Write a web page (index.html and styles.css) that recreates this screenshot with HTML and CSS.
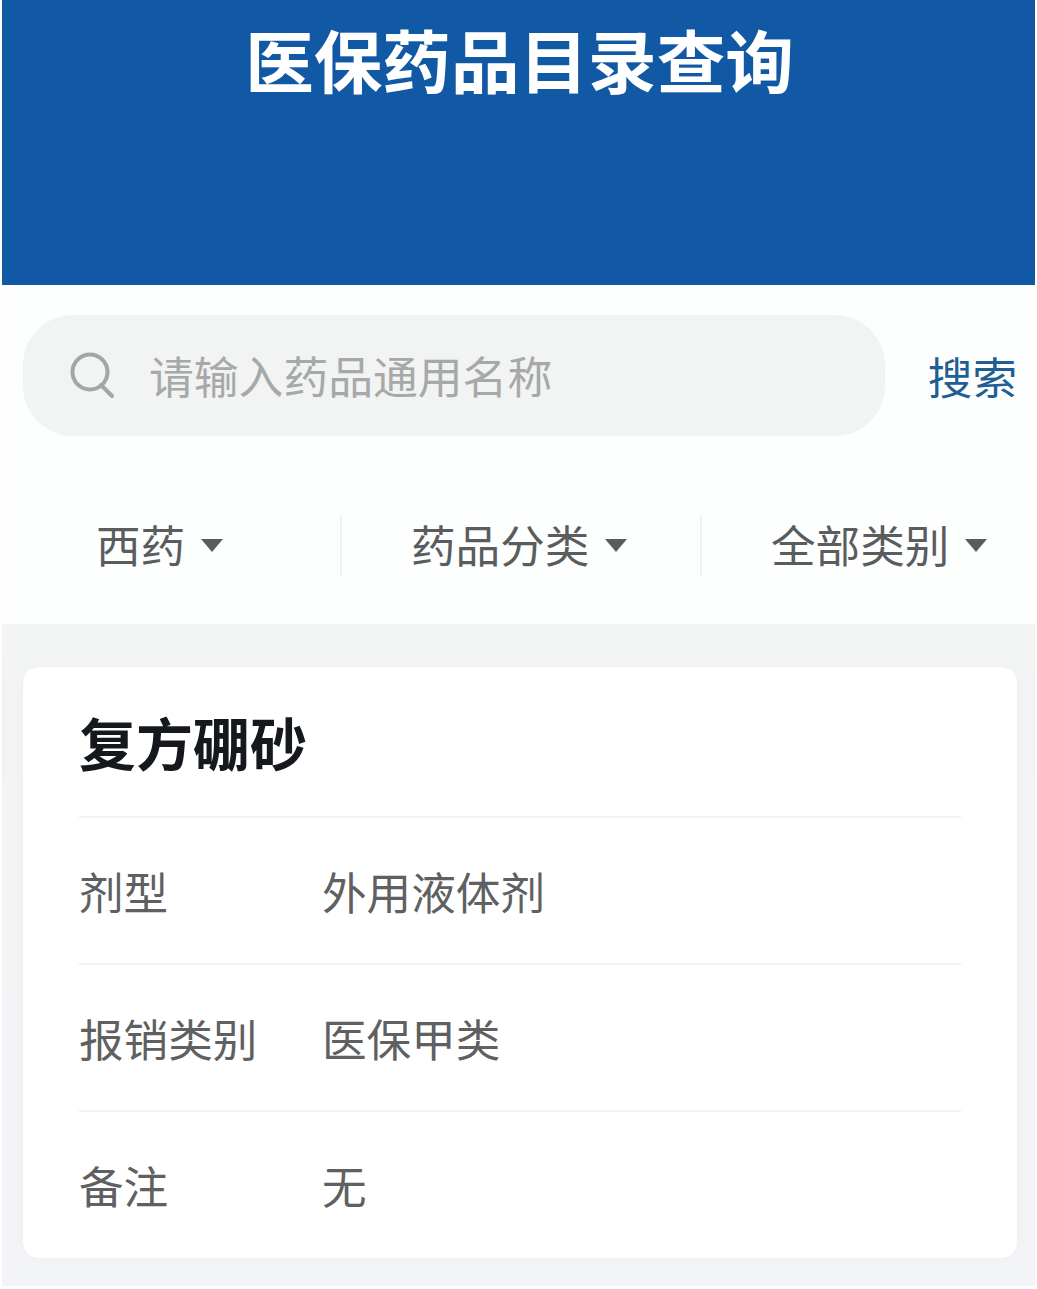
FILE: index.html
```html
<!DOCTYPE html>
<html lang="zh-CN">
<head>
<meta charset="utf-8">
<title>医保药品目录查询</title>
<link rel="stylesheet" href="styles.css">
</head>
<body>
<div class="page">
  <header class="hero"><h1>医保药品目录查询</h1></header>
  <section class="search">
    <div class="search-box">
      <svg class="search-icon" viewBox="0 0 44 46" aria-hidden="true"><circle cx="20" cy="20" r="17.5"/><path d="M31 33l11 11"/></svg>
      <span class="placeholder">请输入药品通用名称</span>
    </div>
    <span class="search-btn">搜索</span>
  </section>
  <nav class="tabs">
    <div class="tab tab-a"><span class="tab-text">西药</span><i class="caret"></i></div>
    <div class="tab tab-b"><span class="tab-text">药品分类</span><i class="caret"></i></div>
    <div class="tab tab-c"><span class="tab-text">全部类别</span><i class="caret"></i></div>
  </nav>
  <main class="list">
    <article class="card">
      <h2>复方硼砂</h2>
      <div class="row"><span class="label">剂型</span><span>外用液体剂</span></div>
      <div class="row"><span class="label">报销类别</span><span>医保甲类</span></div>
      <div class="row"><span class="label">备注</span><span>无</span></div>
    </article>
  </main>
</div>
</body>
</html>
```
FILE: styles.css
```css
* { box-sizing: border-box; margin: 0; padding: 0; }
html, body { background: #fff; }
body { font-family: "Noto Sans CJK SC", "Liberation Sans", sans-serif; width: 1037px; height: 1289px; overflow: hidden; }
.page { margin: 0 2px; width: 1033px; height: 1286px; display: flex; flex-direction: column; background: #fdfefe; }
.hero { flex: none; height: 285px; background: #1158a5; padding-top: 13px; padding-left: 2px; text-align: center; }
.hero h1 { color: #fff; font-size: 68.6px; line-height: 90px; font-weight: 700; }
.search { flex: none; height: 180px; padding: 30px 18px 0 21px; display: flex; align-items: flex-start; justify-content: space-between; }
.search-box { width: 862px; height: 121px; border-radius: 50px; background: #f2f3f3; display: flex; align-items: center; padding-left: 47px; }
.search-icon { width: 44px; height: 46px; margin-bottom: 2px; fill: none; stroke: #a3a6a5; stroke-width: 4; stroke-linecap: round; }
.placeholder { margin-left: 35px; padding-bottom: 2px; font-size: 44.8px; line-height: 60px; color: #a6a9a8; white-space: nowrap; }
.search-btn { font-size: 44.6px; line-height: 60px; margin-top: 31px; color: #1f5f94; white-space: nowrap; }
.tabs { flex: none; height: 159px; display: flex; padding-top: 49px; align-items: flex-start; }
.tab { height: 62px; display: flex; align-items: center; font-size: 44.6px; line-height: 60px; color: #5a5c5e; white-space: nowrap; border-right: 2px solid #f1f2f2; }
.tab-text { padding-bottom: 3px; }
.tab-a { width: 340px; padding-left: 94px; }
.tab-b { width: 360px; padding-left: 69px; }
.tab-c { flex: 1; padding-left: 69px; border-right: 0; }
.caret { margin-left: 16px; width: 0; height: 0; border-left: 11px solid transparent; border-right: 11px solid transparent; border-top: 13px solid #5b5c60; }
.list { flex: 1; min-height: 0; background: linear-gradient(#f2f3f3, #f1f3f7); padding: 42px 17px 27px 20px; }
.card { height: 100%; background: #fff; border-radius: 16px; border: 1px solid #eef0f1; padding: 0 56px 0 56px; }
.card h2 { font-size: 57px; line-height: 76px; font-weight: 700; color: #15191e; height: 151px; padding-top: 36px; border-bottom: 2px solid #f1f3f3; }
.row { height: 147px; display: flex; align-items: center; font-size: 44.6px; line-height: 60px; color: #5e6062; border-bottom: 2px solid #f1f3f3; }
.row:last-child { height: 144px; padding-top: 2px; border-bottom: 0; }
.label { width: 243px; flex: none; }
```
